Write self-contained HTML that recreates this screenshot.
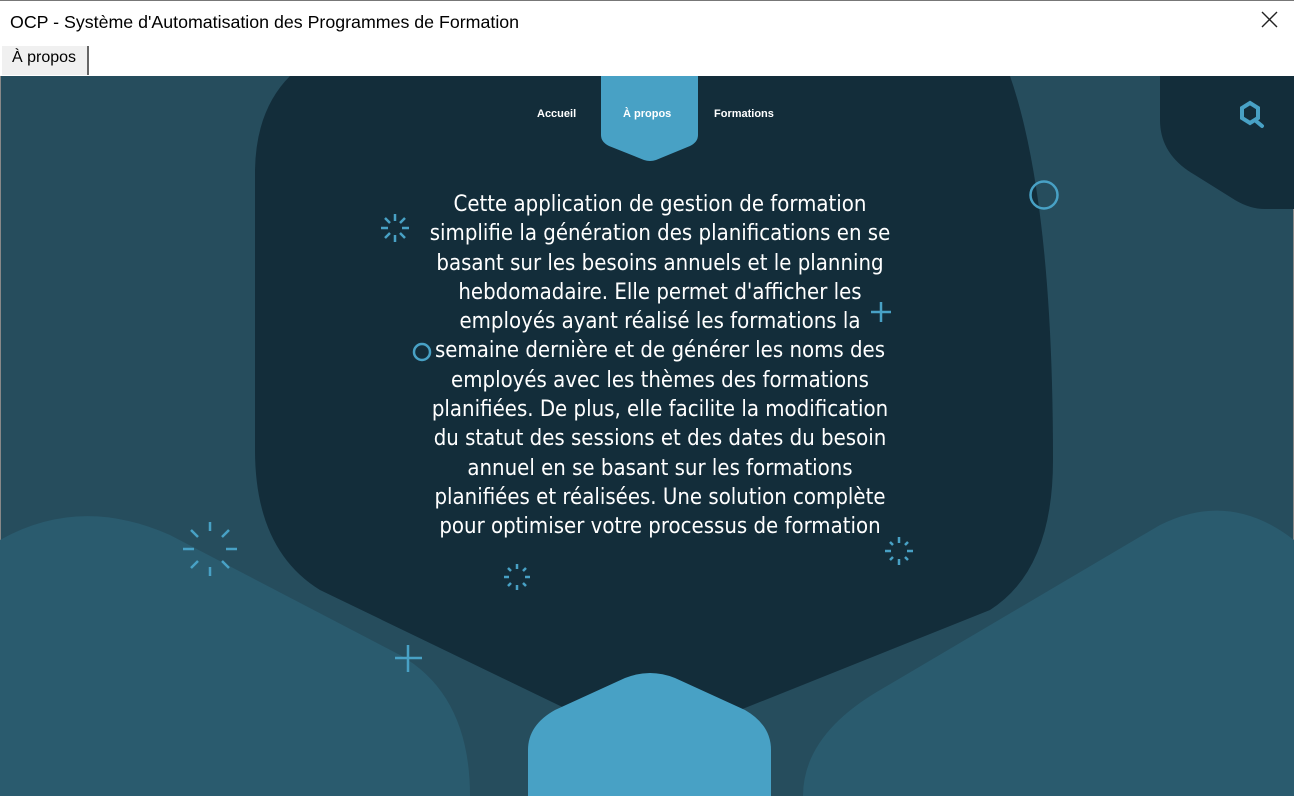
<!DOCTYPE html>
<html><head><meta charset="utf-8"><style>
html,body{margin:0;padding:0;width:1294px;height:796px;overflow:hidden;background:#fff;font-family:"Liberation Sans",sans-serif}
.title{position:absolute;left:10px;top:12px;font-size:17.8px;color:#000}
.close{position:absolute;left:1258px;top:8px;width:24px;height:24px}
.tab{position:absolute;left:2px;top:46px;width:85px;height:29px;background:#f0f0f0;border-right:2px solid #666;font-size:16px;line-height:24px;text-indent:10px}
svg.main{position:absolute;left:0;top:76px}
.txt{position:absolute;left:400px;top:190px;width:520px;text-align:center;color:#fff;font-size:22px;line-height:29.3px;font-family:"DejaVu Sans Condensed","Liberation Sans",sans-serif;letter-spacing:0}
.nav{position:absolute;top:108px;color:#fff;font-size:11px;font-weight:bold}
</style></head><body>
<div style="position:absolute;left:0;top:0;width:1294px;height:1px;background:#777"></div>
<div class="title">OCP - Système d'Automatisation des Programmes de Formation</div>
<svg class="close" viewBox="0 0 24 24"><path d="M4 4L19 19M19 4L4 19" stroke="#222" stroke-width="1.4"/></svg>
<div class="tab">À propos</div>
<svg class="main" width="1294" height="720" viewBox="0 76 1294 720">
<rect x="0" y="76" width="1294" height="720" fill="#264d5d"/>
<rect x="0" y="76" width="1" height="720" fill="#888"/>
<rect x="1293" y="76" width="1" height="720" fill="#888"/>
<path d="M1160 76 L1294 76 L1294 209 L1265 209 Q1250 209 1235 200 L1195 175 Q1160 155 1160 120 Z" fill="#132d3a"/>
<path d="M290 76 L1010 76 Q1053 200 1053 460 Q1053 570 990 610 L690 730 Q650 745 610 730 L320 590 Q255 550 255 450 L255 170 Q256 110 290 76 Z" fill="#132d3a"/>
<path d="M0 540 Q80 495 170 535 L400 655 Q470 695 470 796 L0 796 Z" fill="#2a5b6e"/>
<path d="M1294 540 Q1230 490 1160 525 L880 690 Q803 735 803 796 L1294 796 Z" fill="#2a5b6e"/>
<path d="M528 796 L528 750 Q528 725 555 710 L625 678 Q650 668 675 678 L745 710 Q771 725 771 750 L771 796 Z" fill="#48a1c5"/>
<path d="M601 76 L698 76 L698 135 Q698 142 690 146 L656 160 Q650 162 644 160 L609 146 Q601 142 601 135 Z" fill="#48a1c5"/>
<g stroke="#48a1c5" stroke-width="4" fill="none"><path d="M1250 103 L1258 108 L1258 118 L1250 123 L1242 118 L1242 108 Z"/><path d="M1256 121 L1262 126" stroke-linecap="round"/></g>
<circle cx="1044" cy="195" r="13.5" fill="none" stroke="#48a1c5" stroke-width="2.5"/>
<circle cx="422" cy="352" r="8" fill="none" stroke="#48a1c5" stroke-width="2.5"/>
<g stroke="#48a1c5" stroke-width="2.5"><path d="M881 302V322M871 312H891"/><path d="M408 645V672M395 658H422"/></g>
<g stroke="#48a1c5" stroke-width="2.5">
<g transform="translate(395,228)"><path d="M0-14V-7M0 7V14M-14 0H-7M7 0H14M-10-10L-5-5M5 5L10 10M10-10L5-5M-5 5L-10 10"/></g>
<g transform="translate(210,549)"><path d="M0-27V-18M0 18V27M-27 0H-16M16 0H27M-19-19L-12-12M12 12L19 19M19-19L12-12M-12 12L-19 19"/></g>
<g transform="translate(517,577)"><path d="M0-13V-8M0 8V13M-13 0H-8M8 0H13M-9-9L-6-6M6 6L9 9M9-9L6-6M-6 6L-9 9"/></g>
<g transform="translate(899,551)"><path d="M0-14V-8M0 8V14M-14 0H-8M8 0H14M-9-9L-6-6M6 6L9 9M9-9L6-6M-6 6L-9 9"/></g>
</g>
</svg>
<div class="nav" style="left:537px">Accueil</div>
<div class="nav" style="left:623px">À propos</div>
<div class="nav" style="left:714px">Formations</div>
<div class="txt">Cette application de gestion de formation<br>simplifie la génération des planifications en se<br>basant sur les besoins annuels et le planning<br>hebdomadaire. Elle permet d'afficher les<br>employés ayant réalisé les formations la<br>semaine dernière et de générer les noms des<br>employés avec les thèmes des formations<br>planifiées. De plus, elle facilite la modification<br>du statut des sessions et des dates du besoin<br>annuel en se basant sur les formations<br>planifiées et réalisées. Une solution complète<br>pour optimiser votre processus de formation</div>
</body></html>
